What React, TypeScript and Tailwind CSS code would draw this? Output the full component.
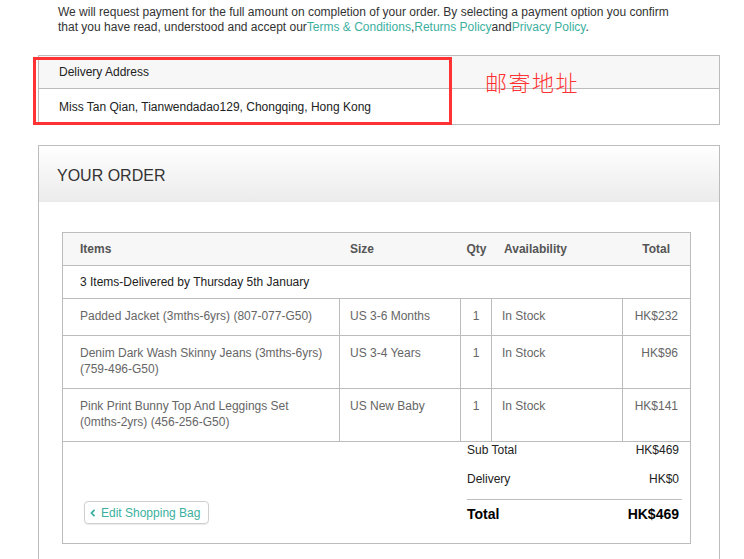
import React from 'react';

const items = [
  { name: 'Padded Jacket (3mths-6yrs) (807-077-G50)', size: 'US 3-6 Months', qty: 1, stock: 'In Stock', total: 'HK$232' },
  { name: 'Denim Dark Wash Skinny Jeans (3mths-6yrs) (759-496-G50)', size: 'US 3-4 Years', qty: 1, stock: 'In Stock', total: 'HK$96' },
  { name: 'Pink Print Bunny Top And Leggings Set (0mths-2yrs) (456-256-G50)', size: 'US New Baby', qty: 1, stock: 'In Stock', total: 'HK$141' },
];

const cols = 'grid grid-cols-[277px_121px_31px_131px_67px]';

export default function App() {
  return (
    <div className="relative w-[744px] h-[559px] overflow-hidden bg-white text-[12px] font-['Liberation_Sans',Arial,sans-serif]">
      <p className="ml-[58px] pt-[5px] w-[628px] leading-[15px] text-[#333]">
        We will request payment for the full amount on completion of your order. By selecting a payment option you confirm that you have read, understood and accept our
        <span className="text-[#3bb0a0]">Terms &amp; Conditions</span>,<span className="text-[#3bb0a0]">Returns Policy</span>and<span className="text-[#3bb0a0]">Privacy Policy</span>.
      </p>

      <div className="mt-[20px] ml-[38px] w-[682px] border border-[#bcbcbc]">
        <div className="h-[33px] bg-[#f7f7f7] border-b border-[#bcbcbc] flex items-center pl-[20px] text-[#222]">Delivery Address</div>
        <div className="h-[35px] flex items-center pl-[20px] text-[#222]">Miss Tan Qian, Tianwendadao129, Chongqing, Hong Kong</div>
      </div>

      {/* annotation overlay */}
      <div className="absolute left-[33px] top-[57px] w-[419px] h-[68px] border-[3px] border-[#f33]" />
      <div className="absolute left-[485px] top-[67px] text-[22px] leading-[28px] text-[#f33] font-['Noto_Sans_CJK_SC',sans-serif] font-light tracking-[1.5px]">邮寄地址</div>

      <div className="mt-[20px] ml-[38px] w-[682px] border border-[#bcbcbc] pb-[60px]">
        <div className="h-[56px] bg-gradient-to-b from-white to-[#ebebeb] flex items-center pl-[18px] pt-[4px] text-[16px] text-[#333]">YOUR ORDER</div>
        <div className="pt-[30px] pl-[23px]">
          <div className="w-[629px] border border-[#bcbcbc]">
            <div className={`${cols} h-[33px] items-center bg-[#f7f7f7] border-b border-[#bcbcbc] font-bold text-[#555]`}>
              <div className="pl-[17px]">Items</div>
              <div className="pl-[10px]">Size</div>
              <div className="text-center">Qty</div>
              <div className="pl-[12px]">Availability</div>
              <div className="text-right pr-[20px]">Total</div>
            </div>
            <div className="h-[33px] flex items-center pl-[17px] border-b border-[#bcbcbc] text-[#222]">3 Items-Delivered by Thursday 5th January</div>
            {items.map((it) => (
              <div key={it.name} className={`${cols} border-b border-[#bcbcbc] divide-x divide-[#bcbcbc] text-[#666] leading-[16px]`}>
                <div className="pl-[17px] pr-[12px] pt-[9px] pb-[11px]">{it.name}</div>
                <div className="pl-[10px] pt-[9px]">{it.size}</div>
                <div className="text-center pt-[9px]">{it.qty}</div>
                <div className="pl-[10px] pt-[9px]">{it.stock}</div>
                <div className="text-right pr-[12px] pt-[9px]">{it.total}</div>
              </div>
            ))}
            <div className="flex h-[101px]">
              <div className="flex-1 flex items-end pl-[21px] pb-[19px]">
                <button className="h-[23px] w-[125px] flex items-center gap-[5px] pl-[5px] border border-[#cfcfcf] rounded-[4px] shadow-[0_1px_1px_rgba(0,0,0,0.08)] text-[#3bb0a0]">
                  <svg width="6" height="8" viewBox="0 0 6 8" className="mt-[1px]">
                    <path d="M4.5 0.8 L1.5 4 L4.5 7.2" fill="none" stroke="#3bb0a0" strokeWidth="1.8" />
                  </svg>
                  Edit Shopping Bag
                </button>
              </div>
              <div className="w-[215px] mr-[8px] text-[#222] leading-[16px]">
                <div className="flex justify-between pr-[3px]"><span>Sub Total</span><span>HK$469</span></div>
                <div className="flex justify-between pr-[3px] mt-[13px]"><span>Delivery</span><span>HK$0</span></div>
                <div className="mt-[12px] border-t border-[#bcbcbc]" />
                <div className="flex justify-between pr-[3px] mt-[6px] text-[14px] font-bold text-black"><span>Total</span><span>HK$469</span></div>
              </div>
            </div>
          </div>
        </div>
      </div>
    </div>
  );
}
